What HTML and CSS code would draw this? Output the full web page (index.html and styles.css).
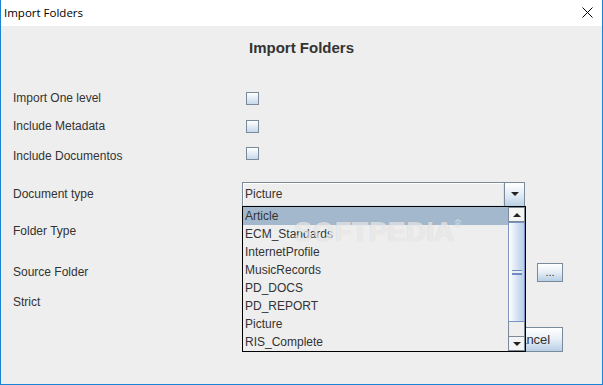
FILE: index.html
```html
<!DOCTYPE html>
<html lang="en">
<head>
    <meta charset="UTF-8">
    <title>Import Folders</title>
    <link rel="stylesheet" href="styles.css">
</head>
<body>

    <div class="window">
        <!-- Title bar -->
        <div class="titlebar">
            <span class="titlebar-text">Import Folders</span>
            <svg class="titlebar-close" width="11" height="11" viewBox="0 0 11 11">
                <path d="M0.5 0.5 L10.5 10.5 M10.5 0.5 L0.5 10.5" stroke="#000" stroke-width="1" fill="none"/>
            </svg>
        </div>

        <div class="dialog">
            <h1 class="heading">Import Folders</h1>

            <div class="form">
                <label class="label">Import One level</label>
                <div class="cell"><span class="check"></span></div>

                <label class="label">Include Metadata</label>
                <div class="cell"><span class="check"></span></div>

                <label class="label label-low">Include Documentos</label>
                <div class="cell"><span class="check"></span></div>

                <label class="label">Document type</label>
                <div class="cell">
                    <div class="combo">
                        <span class="combo-value">Picture</span>
                        <span class="combo-arrow"><i class="arrow-down"></i></span>
                    </div>
                </div>

                <label class="label">Folder Type</label>
                <div class="cell">
                    <div class="combo">
                        <span class="combo-value">Folder</span>
                        <span class="combo-arrow"><i class="arrow-down"></i></span>
                    </div>
                </div>

                <label class="label">Source Folder</label>
                <div class="cell"><span class="field"></span></div>
                <div class="cell cell-browse"><button class="btn btn-small" type="button">...</button></div>

                <label class="label">Strict</label>
                <div class="cell"><span class="check"></span></div>

                <div class="buttons">
                    <button class="btn" type="button">OK</button>
                    <button class="btn btn-cancel" type="button">Cancel</button>
                </div>
            </div>
        </div>

        <!-- Open drop-down of "Document type" -->
        <div class="popup">
            <ul class="popup-list">
                <li class="selected">Article</li>
                <li>ECM_Standards</li>
                <li>InternetProfile</li>
                <li>MusicRecords</li>
                <li>PD_DOCS</li>
                <li>PD_REPORT</li>
                <li>Picture</li>
                <li>RIS_Complete</li>
            </ul>
            <div class="scrollbar">
                <span class="scroll-btn"><i class="arrow-up"></i></span>
                <span class="scroll-thumb"><i class="grip"></i></span>
                <span class="scroll-track"></span>
                <span class="scroll-btn"><i class="arrow-down"></i></span>
            </div>
        </div>

        <div class="watermark">SOFTPEDIA<sup>®</sup></div>
    </div>

</body>
</html>
```

FILE: styles.css
```css
body {
    margin: 0;
    padding: 0;
    background: #eeeeee;
    font-family: "Liberation Sans", Arial, sans-serif;
    font-size: 12px;
    color: #333333;
}

.window {
    position: relative;
    width: 603px;
    height: 385px;
    box-sizing: border-box;
    border: 1px solid #1883d7;
    border-top: none;
    background: #eeeeee;
    display: flex;
    flex-direction: column;
    overflow: hidden;
}

/* Title bar */
.titlebar {
    height: 26px;
    flex: 0 0 26px;
    background: #ffffff;
    display: flex;
    align-items: center;
    justify-content: space-between;
    padding: 0 9px 0 3px;
}

.titlebar-text {
    font-family: "Open Sans", "Noto Sans", sans-serif;
    font-size: 11.5px;
    color: #000000;
    margin-top: -1px;
}

.titlebar-close {
    margin-top: -1px;
}

/* Dialog content */
.dialog {
    flex: 1;
}

.heading {
    margin: 13px 0 0;
    font-size: 15px;
    line-height: 17px;
    font-weight: bold;
    text-align: center;
    color: #333333;
}

.form {
    display: grid;
    grid-template-columns: 229px 283px 12px 26px;
    grid-template-rows: 28px 27px 41px 37px 41px 30px 37px 26px;
    align-items: start;
    margin-top: 29px;
    padding-left: 12px;
}

.label,
.cell {
    height: 26px;
    display: flex;
    align-items: center;
}

.label {
    grid-column: 1;
    box-sizing: border-box;
}

.label-low {
    padding-top: 6px;
}

.cell-browse {
    grid-column: 4;
}

/* Ocean look checkbox */
.check {
    width: 11px;
    height: 11px;
    margin-left: 4px;
    border: 1px solid #7a8a99;
    background: linear-gradient(#ffffff, #dde8f3 60%, #c7d9ec);
}

/* Combo box */
.combo {
    width: 283px;
    height: 25px;
    box-sizing: border-box;
    border: 1px solid #7a8a99;
    display: flex;
}

.combo-value {
    flex: 1;
    border: 1px solid #ffffff;
    border-color: #ffffff #d9e3ed #d9e3ed #ffffff;
    background: #eeeeee;
    padding-left: 1px;
    display: flex;
    align-items: center;
}

.combo-arrow {
    width: 19px;
    border-left: 1px solid #7a8a99;
    background: linear-gradient(#ffffff, #dde8f3 60%, #b8cfe5);
    display: flex;
    align-items: center;
    justify-content: center;
}

.arrow-down,
.arrow-up {
    width: 0;
    height: 0;
    border-left: 4px solid transparent;
    border-right: 4px solid transparent;
}

.arrow-down {
    border-top: 4px solid #222222;
}

.arrow-up {
    border-bottom: 4px solid #222222;
}

.field {
    width: 283px;
    height: 20px;
    box-sizing: border-box;
    border: 1px solid #7a8a99;
    background: #ffffff;
}

/* Buttons */
.btn {
    font-family: inherit;
    font-size: 12px;
    color: #333333;
    height: 25px;
    padding: 0 14px;
    border: 1px solid #7a8a99;
    background: linear-gradient(#ffffff, #e9f0f7 45%, #b8cfe5);
}

.btn-small {
    width: 26px;
    height: 19px;
    padding: 0;
    font-size: 11px;
    line-height: 14px;
}

.buttons {
    grid-column: 2 / 5;
    display: flex;
    justify-content: flex-end;
    gap: 6px;
    padding-top: 1px;
}

.btn-cancel {
    width: 66px;
    padding: 0;
    font-size: 13px;
}

/* Drop-down list popup */
.popup {
    position: absolute;
    left: 241px;
    top: 206px;
    width: 284px;
    height: 146px;
    box-sizing: border-box;
    border: 1px solid #000000;
    background: #eeeeee;
    display: flex;
}

.popup-list {
    flex: 1;
    list-style: none;
    margin: 0;
    padding: 0;
}

.popup-list li {
    height: 18px;
    line-height: 19px;
    padding-left: 2px;
    font-size: 12px;
}

.popup-list li.selected {
    background: #a3b8cc;
}

.scrollbar {
    width: 17px;
    display: flex;
    flex-direction: column;
}

.scroll-btn {
    height: 15px;
    box-sizing: border-box;
    border: 1px solid #7a8a99;
    background: #f3f3f3;
    display: flex;
    align-items: center;
    justify-content: center;
}

.scroll-thumb {
    height: 100px;
    box-sizing: border-box;
    border: 1px solid #7b92c2;
    background: linear-gradient(to right, #ffffff, #d5e2f3 55%, #b9cde9);
    display: flex;
    align-items: center;
    justify-content: center;
}

.grip {
    width: 10px;
    height: 5px;
    border-top: 1px solid #6382bf;
    border-bottom: 1px solid #6382bf;
    background: linear-gradient(#eeeeee 0 2px, #6382bf 2px 3px, #eeeeee 3px);
    box-sizing: border-box;
    opacity: 0.9;
}

.scroll-track {
    flex: 1;
    border-left: 1px solid #7a8a99;
    border-right: 1px solid #7a8a99;
    background: #eeeeee;
}

/* Site watermark over the screenshot */
.watermark {
    position: absolute;
    left: 293px;
    top: 210px;
    font-size: 28px;
    line-height: 28px;
    font-weight: bold;
    color: rgba(255, 255, 255, 0.6);
    text-shadow: 0 0 1px rgba(110, 110, 110, 0.3);
    pointer-events: none;
}

.watermark sup {
    font-size: 10px;
    vertical-align: 14px;
}
```
